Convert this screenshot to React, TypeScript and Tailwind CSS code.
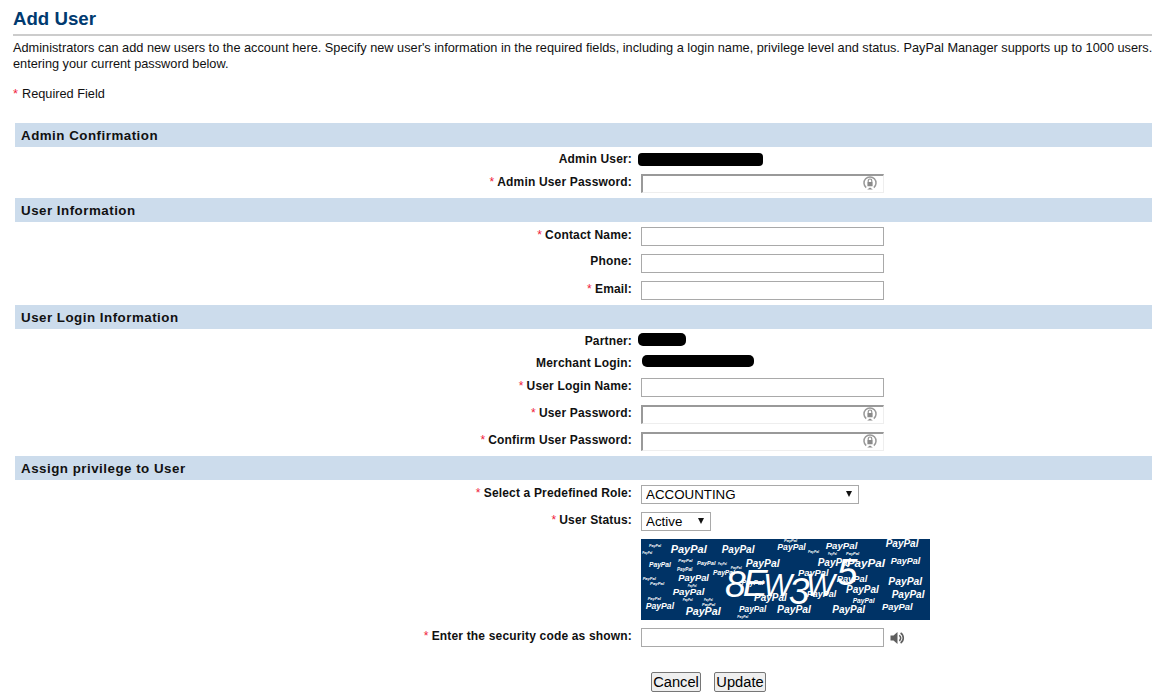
import React from "react";

function Star() {
  return <span className="mr-[3px] text-[#f0203a] font-normal">*</span>;
}

function Bar({ children }: { children: React.ReactNode }) {
  return (
    <div className="h-6 ml-[15px] pl-[6px] pt-[1px] bg-[#ccdcec] flex items-center text-[13.33px] font-bold text-[#111] tracking-[0.5px]">
      {children}
    </div>
  );
}

function Row({
  label,
  req,
  h,
  children,
  pt = "pt-[4px]",
  lift = "",
}: {
  label: string;
  req?: boolean;
  h: string;
  children?: React.ReactNode;
  pt?: string;
  lift?: string;
}) {
  return (
    <div className={`flex items-start ${h} ${pt}`}>
      <div className={`w-[632px] shrink-0 text-right text-[12px] leading-[16px] font-bold text-[#111] tracking-[0.17px] whitespace-nowrap ${lift}`}>
        {req && <Star />}
        {label}
      </div>
      <div className="ml-[9px] flex items-center">{children}</div>
    </div>
  );
}

function TextBox() {
  return <input type="text" className="block w-[243px] h-[19px] border border-[#a9a9a9] bg-white outline-none" />;
}

function LockIcon() {
  return (
    <svg width="14" height="14" viewBox="0 0 14 14" className="absolute right-[7px] top-[2px]">
      <path d="M3.2 11.6A6 6 0 1 1 10.8 11.6" fill="none" stroke="#999999" strokeWidth="1.5" />
      <path d="M5.2 6V4.8a1.8 1.8 0 0 1 3.6 0V6" fill="none" stroke="#8a8a8a" strokeWidth="1.1" />
      <rect x="4.4" y="6" width="5.2" height="4.2" rx="0.5" fill="#8a8a8a" />
      <path d="M4.2 13.6l2.8-2.2 2.8 2.2z" fill="#8a8a8a" />
    </svg>
  );
}

function PasswordBox() {
  return (
    <div className="relative w-[243px] h-[19px]">
      <input
        type="password"
        className="block w-full h-full bg-white border-t-2 border-l-2 border-r border-b border-t-[#999999] border-l-[#999999] border-r-[#eeeeee] border-b-[#eeeeee] outline-none"
      />
      <LockIcon />
    </div>
  );
}

function Choice({ w, value, options }: { w: string; value: string; options: string[] }) {
  return (
    <div className={`relative ${w} h-[19px]`}>
      <select
        defaultValue={value}
        className="block appearance-none w-full h-full border border-[#a9a9a9] rounded-none bg-white pl-[4px] text-[13.33px] leading-[17px] text-black outline-none"
      >
        {options.map((o) => (
          <option key={o}>{o}</option>
        ))}
      </select>
      <svg width="6" height="6" viewBox="0 0 6 6" className="absolute right-[7px] top-[6px] pointer-events-none">
        <path d="M0 0h6L3 6z" fill="#111" />
      </svg>
    </div>
  );
}

const marks: [number, number, number][] = [
  [57, 36, 11], [37, 57, 9], [122, 54, 33], [275, 54, 30], [462, 22, 12], [442, 46, 26],
  [534, 55, 10], [594, 59, 8], [648, 61, 12], [587, 41, 29], [767, 37, 30], [57, 96, 20],
  [145, 80, 13], [141, 107, 14], [201, 91, 17], [264, 90, 8], [302, 101, 10], [347, 97, 31],
  [563, 92, 30], [650, 97, 35], [782, 88, 27], [249, 120, 20], [504, 122, 28], [38, 135, 12],
  [60, 151, 13], [145, 139, 28], [173, 155, 8], [620, 140, 28], [775, 151, 31], [128, 180, 29],
  [372, 197, 30], [648, 173, 30], [785, 190, 30], [530, 185, 27], [53, 195, 12], [158, 197, 9],
  [222, 198, 8], [216, 212, 12], [668, 204, 20], [47, 222, 26], [167, 240, 32], [327, 232, 25],
  [441, 233, 31], [607, 234, 30], [756, 226, 28], [322, 248, 10], [335, 150, 20],
];

const code: [string, number, number, number][] = [
  ["8", 285, 185, 112],
  ["E", 338, 182, 112],
  ["W", 400, 182, 92],
  ["3", 476, 208, 112],
  ["W", 528, 183, 92],
  ["5", 620, 150, 112],
];

function Captcha() {
  return (
    <svg width="289" height="81" viewBox="33 12 867 243" className="block">
      <rect x="33" y="12" width="867" height="243" fill="#003366" />
      <g fontFamily="'Liberation Sans', Arial, sans-serif" fontWeight="700" fontStyle="italic" fill="#ffffff">
        {marks.map(([x, y, s], i) => (
          <text key={i} x={x} y={y} fontSize={s}>
            PayPal
          </text>
        ))}
      </g>
      <g fontFamily="'Liberation Sans', Arial, sans-serif" fontStyle="italic" fill="#ffffff">
        {code.map(([c, x, y, s], i) => (
          <text key={i} x={x} y={y} fontSize={s}>
            {c}
          </text>
        ))}
      </g>
    </svg>
  );
}

function Speaker() {
  return (
    <svg width="15" height="14" viewBox="0 0 15 14" className="ml-[6px] mt-[1px]">
      <path d="M0.5 4.5h3L7.5 1v12l-4-3.5h-3z" fill="#5f5f5f" />
      <path d="M9.2 4.3a3.2 3.2 0 0 1 0 5.4" fill="none" stroke="#5f5f5f" strokeWidth="1.6" />
      <path d="M10.6 2a6 6 0 0 1 0 10" fill="none" stroke="#5f5f5f" strokeWidth="1.6" />
    </svg>
  );
}

export default function App() {
  return (
    <div
      className="w-[1152px] h-[697px] overflow-hidden bg-white text-[#111]"
      style={{ fontFamily: "'Liberation Sans', Arial, sans-serif" }}
    >
      <div className="ml-[13px]">
        <h1 className="pt-[8px] h-[34px] text-[18.67px] leading-[22px] font-bold text-[#003a70]">Add User</h1>
        <div className="h-[2px] bg-[#cccccc]" />
        <p className="mt-[4px] text-[12.75px] leading-[16px] whitespace-nowrap">
          Administrators can add new users to the account here. Specify new user's information in the required fields, including a login name, privilege level and status. PayPal Manager supports up to 1000 users.
          <br />
          entering your current password below.
        </p>
        <p className="mt-[14px] h-[37px] text-[12.75px] leading-[16px]">
          <span className="mr-[4px] text-[#f0203a]">*</span>
          Required Field
        </p>
      </div>

      <Bar>Admin Confirmation</Bar>
      <Row label="Admin User:" h="h-[23px]">
        <div className="-ml-[3px] mt-[2px] w-[125px] h-[13px] bg-black rounded-[4px]" />
      </Row>
      <Row label="Admin User Password:" req h="h-[28px]">
        <PasswordBox />
      </Row>

      <Bar>User Information</Bar>
      <Row label="Contact Name:" req h="h-[28px]" pt="pt-[5px]"><TextBox /></Row>
      <Row label="Phone:" h="h-[27px]" lift="-mt-[1px]"><TextBox /></Row>
      <Row label="Email:" req h="h-[28px]"><TextBox /></Row>

      <Bar>User Login Information</Bar>
      <Row label="Partner:" h="h-[22px]">
        <div className="-ml-[3px] w-[48px] h-[13px] bg-black rounded-[5px]" />
      </Row>
      <Row label="Merchant Login:" h="h-[23px]">
        <div className="ml-[1px] w-[112px] h-[12px] bg-black rounded-[5px]" />
      </Row>
      <Row label="User Login Name:" req h="h-[27px]"><TextBox /></Row>
      <Row label="User Password:" req h="h-[27px]"><PasswordBox /></Row>
      <Row label="Confirm User Password:" req h="h-[28px]"><PasswordBox /></Row>

      <Bar>Assign privilege to User</Bar>
      <Row label="Select a Predefined Role:" req h="h-[28px]" pt="pt-[5px]">
        <Choice w="w-[218px]" value="ACCOUNTING" options={["ACCOUNTING", "ADMIN", "REPORTING"]} />
      </Row>
      <Row label="User Status:" req h="h-[31px]">
        <Choice w="w-[70px]" value="Active" options={["Active", "Inactive"]} />
      </Row>
      <div className="pl-[641px] h-[89px]">
        <Captcha />
      </div>
      <Row label="Enter the security code as shown:" req h="h-[44px]" pt="pt-0">
        <TextBox />
        <Speaker />
      </Row>
      <div className="flex pl-[651px] gap-[13px]">
        <button className="w-[50px] h-[20px] border border-[#767676] rounded-[2px] bg-[#efefef] text-[14.67px] leading-[18px] text-black p-0">Cancel</button>
        <button className="w-[52px] h-[20px] border border-[#767676] rounded-[2px] bg-[#efefef] text-[14.67px] leading-[18px] text-black p-0">Update</button>
      </div>
    </div>
  );
}
